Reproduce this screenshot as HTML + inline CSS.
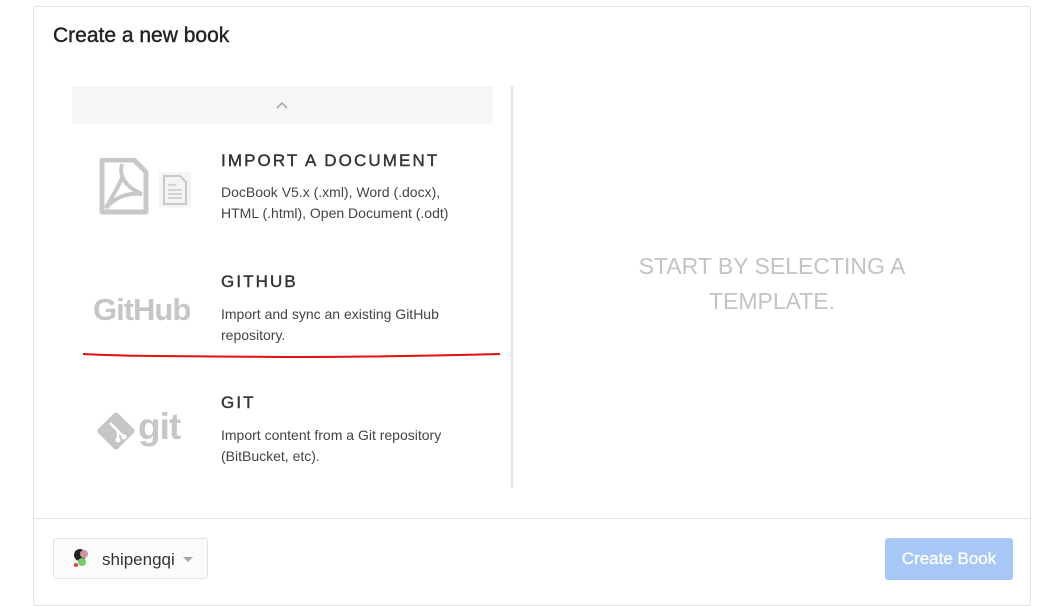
<!DOCTYPE html>
<html><head><style>
body{margin:0;width:1043px;height:601px;background:#fff;font-family:"Liberation Sans",sans-serif;position:relative;overflow:hidden}
.card{position:absolute;left:33px;top:6px;width:998px;height:600px;border:1px solid #e3e3e3;border-radius:3px;box-sizing:border-box}
h1{position:absolute;left:53px;top:24px;margin:0;font-size:21px;font-weight:normal;color:#222;-webkit-text-stroke:0.4px #222}
.up{position:absolute;left:72px;top:86px;width:421px;height:38px;background:#f5f6f7;border-radius:2px}
.vl{position:absolute;left:511px;top:86px;width:2px;height:402px;background:#e5e5e5}
.h{position:absolute;left:221px;font-size:17px;letter-spacing:2.1px;color:#333;-webkit-text-stroke:0.4px #333}
.d{position:absolute;left:221px;font-size:14px;line-height:21px;color:#444}
.sep{position:absolute;left:34px;top:518px;width:996px;height:1px;background:#e3e3e3}
.user{position:absolute;left:53px;top:538px;width:155px;height:41px;border:1px solid #e3e3e3;border-radius:3px;box-sizing:border-box;background:#fbfbfb}
.btn{position:absolute;left:885px;top:538px;width:128px;height:42px;background:#a7c8f7;border-radius:3px;color:#fff;font-size:17px;text-align:center;line-height:42px;-webkit-text-stroke:0.3px #fff}
</style></head><body>
<div class="card"></div>
<h1>Create a new book</h1>
<div class="up"><svg style="position:absolute;left:204px;top:15px" width="12" height="8"><path d="M1 7 L6 2 L11 7" stroke="#aaa" stroke-width="1.6" fill="none"/></svg></div>
<div class="vl"></div>
<svg style="position:absolute;left:98px;top:158px" width="95" height="58">
<path d="M4 2 H36 L48 14 V54 H4 Z" fill="none" stroke="#c8c8c8" stroke-width="5" stroke-linejoin="round"/>
<path d="M24 6 C20 20 30 30 44 36 C30 34 16 40 8 50 C14 38 20 30 24 20" fill="none" stroke="#c8c8c8" stroke-width="4"/>
<rect x="61" y="14" width="32" height="36" fill="#f4f4f4"/>
<path d="M66 18 H82 L88 24 V46 H66 Z" fill="none" stroke="#c8c8c8" stroke-width="2"/>
<path d="M70 27h8M70 32h14M70 36h14M70 40h14" stroke="#c8c8c8" stroke-width="1.5"/>
</svg>
<div style="position:absolute;left:93px;top:292px;font-size:31px;font-weight:bold;color:#c6c6c6;letter-spacing:-1px">GitHub</div>
<svg style="position:absolute;left:95px;top:410px" width="42" height="42"><rect x="7" y="7" width="28" height="28" transform="rotate(45 21 21)" fill="#c6c6c6" rx="3"/><path d="M15 13 L23 21 V30 M23 21 L29 27" stroke="#fff" stroke-width="2.5" fill="none"/><circle cx="23" cy="30" r="2.5" fill="#fff"/><circle cx="29" cy="27" r="2.5" fill="#fff"/></svg>
<div style="position:absolute;left:138px;top:406px;font-size:37px;font-weight:bold;color:#c6c6c6;letter-spacing:-1px">git</div>
<div class="h" style="top:151px">IMPORT A DOCUMENT</div>
<div class="d" style="top:182px">DocBook V5.x (.xml), Word (.docx),<br>HTML (.html), Open Document (.odt)</div>
<div class="h" style="top:272px">GITHUB</div>
<div class="d" style="top:304px">Import and sync an existing GitHub<br>repository.</div>
<div class="h" style="top:393px">GIT</div>
<div class="d" style="top:425px">Import content from a Git repository<br>(BitBucket, etc).</div>
<svg style="position:absolute;left:82px;top:350px" width="420" height="12"><path d="M1 4 C40 6 60 6 200 7 C300 7 380 5 418 4" stroke="#e01010" stroke-width="2" fill="none"/></svg>
<div style="position:absolute;left:560px;top:249px;width:424px;text-align:center;font-size:23px;line-height:35px;color:#c3c3c3">START BY SELECTING A<br>TEMPLATE.</div>
<div class="sep"></div>
<div class="user">
<svg style="position:absolute;left:14px;top:7px" width="26" height="26"><circle cx="12" cy="9" r="6" fill="#222"/><circle cx="16" cy="8" r="4" fill="#c99"/><circle cx="14" cy="16" r="4" fill="#7c6"/><circle cx="8" cy="19" r="2" fill="#d44"/></svg>
<div style="position:absolute;left:48px;top:11px;font-size:17px;color:#333">shipengqi</div>
<svg style="position:absolute;left:129px;top:18px" width="10" height="6"><path d="M0 0 H10 L5 5 Z" fill="#aaa"/></svg>
</div>
<div class="btn">Create Book</div>
</body></html>
